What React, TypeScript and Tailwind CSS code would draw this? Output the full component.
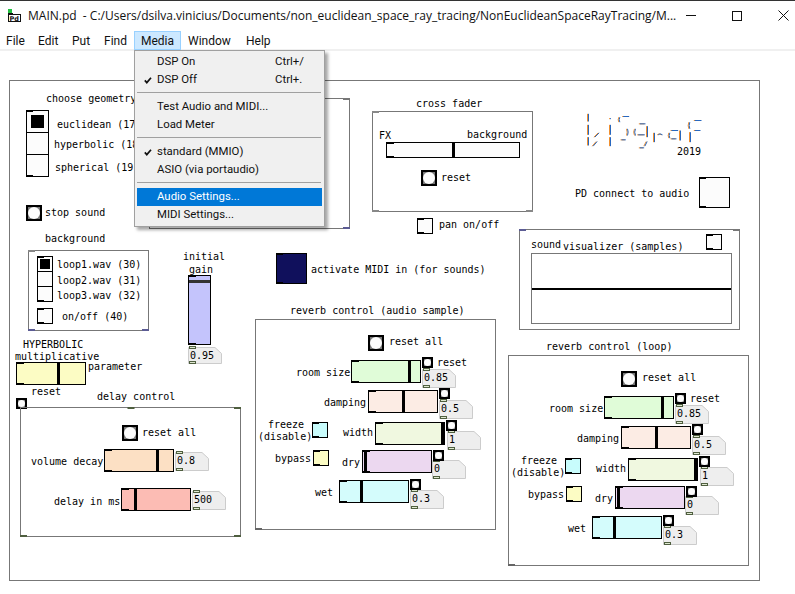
import React from "react";

const TOP = 51;
const ui = "font-['Open_Sans','Noto_Sans',sans-serif]";

type P = { x: number; y: number };
const at = (x: number, y: number, w?: number, h?: number): React.CSSProperties => ({ left: x, top: y - TOP, width: w, height: h });

function T({ x, y, children }: P & { children: React.ReactNode }) {
  return (
    <span className="absolute whitespace-pre text-[10px] leading-[12px] text-black font-['DejaVu_Sans_Mono',monospace]" style={at(x, y - 5)}>
      {children}
    </span>
  );
}

function Tick({ l, r, c, b, color = "bg-[#666]" }: { l?: boolean; r?: boolean; c?: boolean; b?: boolean; color?: string }) {
  return (
    <span
      className={`absolute h-[2px] w-[7px] ${color} ${b ? "bottom-[-1px]" : "top-[-1px]"} ${l ? "left-[-1px]" : ""} ${r ? "right-[-1px]" : ""} ${c ? "left-1/2 -translate-x-1/2" : ""}`}
    />
  );
}

function Box({ x, y, w, h, children }: P & { w: number; h: number; children?: React.ReactNode }) {
  return (
    <div className="absolute border border-[#777] box-border" style={at(x, y, w, h)}>
      {children}
    </div>
  );
}

function Bang({ x, y, s }: P & { s: number }) {
  return (
    <div className="absolute border-2 border-black bg-[#777] box-border" style={at(x, y, s, s)}>
      <div className="h-full w-full rounded-full bg-[#fcfcfc]" />
    </div>
  );
}

function Toggle({ x, y, s, s2, fill = "bg-[#fcfcfc]" }: P & { s: number; s2?: number; fill?: string }) {
  return (
    <div className={`absolute border border-black box-border ${fill}`} style={at(x, y, s, s2 ?? s)}>
      <span className="absolute left-[-1px] top-[-1px] h-[2px] w-[7px] bg-black" />
      <span className="absolute left-[-1px] bottom-[-1px] h-[2px] w-[7px] bg-black" />
    </div>
  );
}

function Radio({ x, y, s, n, sel, inset }: P & { s: number; n: number; sel: number; inset: number }) {
  return (
    <div className="absolute border border-black bg-[#fcfcfc] box-border flex flex-col" style={at(x, y, s + 1, s * n + 1)}>
      <span className="absolute left-[-1px] top-[-1px] h-[2px] w-[7px] bg-black" />
      <span className="absolute left-[-1px] bottom-[-1px] h-[2px] w-[7px] bg-black" />
      {Array.from({ length: n }).map((_, i) => (
        <div key={i} className={`flex-1 relative ${i ? "border-t border-black" : ""}`}>
          {i === sel && <span className="absolute bg-black" style={{ left: inset, right: inset, top: inset, bottom: inset }} />}
        </div>
      ))}
    </div>
  );
}

function HSlider({ x, y, w = 70, h = 23, fill, knob }: P & { w?: number; h?: number; fill: string; knob: number }) {
  return (
    <div className={`absolute border border-black box-border ${fill}`} style={at(x, y, w, h)}>
      <span className="absolute left-[-1px] top-[-1px] h-[2px] w-[8px] bg-black" />
      <span className="absolute left-[-1px] bottom-[-1px] h-[2px] w-[8px] bg-black" />
      <span className="absolute top-0 bottom-0 w-[3px] bg-black" style={{ left: knob - x - 1 }} />
    </div>
  );
}

function Num({ x, y, w = 33, h = 18, v }: P & { w?: number; h?: number; v: string }) {
  return (
    <>
      <svg className="absolute" style={at(x, y, w + 1, h + 1)}>
        <polygon
          points={`0.5,0.5 ${w - 6},0.5 ${w + 0.5},6.5 ${w + 0.5},${h + 0.5} 0.5,${h + 0.5}`}
          fill="#eeeeee"
          stroke="#cccccc"
        />
      </svg>
      <span className="absolute h-[3px] w-[7px] border border-[#4f5f3f] bg-[#dfe8d0] box-border" style={at(x + 1, y - 1)} />
      <span className="absolute h-[3px] w-[7px] border border-[#4f5f3f] bg-[#dfe8d0] box-border" style={at(x + 1, y + h - 2)} />
      <T x={x + 2} y={y + 8}>{v}</T>
    </>
  );
}

function Reverb({ dx, dy, title, tx }: { dx: number; dy: number; title: string; tx: number }) {
  const a = (x: number) => x + dx;
  const b = (y: number) => y + dy;
  const rows = [
    { lx: 296, ly: 372, t: "room size", sx: 351, sy: 360, f: "bg-[#e0fcd8]", k: 408, bx: 422, by: 357, nx: 422, ny: 369, v: "0.85" },
    { lx: 324, ly: 402, t: "damping", sx: 368, sy: 390, f: "bg-[#fcece4]", k: 402, bx: 439, by: 388, nx: 439, ny: 400, v: "0.5" },
    { lx: 343, ly: 432, t: "width", sx: 375, sy: 422, f: "bg-[#f0f8e0]", k: 441, bx: 446, by: 420, nx: 447, ny: 431, v: "1" },
    { lx: 342, ly: 462, t: "dry", sx: 362, sy: 450, f: "bg-[#ecd8f0]", k: 364, bx: 433, by: 450, nx: 432, ny: 460, v: "0" },
    { lx: 315, ly: 492, t: "wet", sx: 339, sy: 480, f: "bg-[#d4fcfc]", k: 360, bx: 410, by: 479, nx: 410, ny: 490, v: "0.3" },
  ];
  return (
    <>
      <T x={tx} y={b(310)}>{title}</T>
      <Box x={a(255)} y={b(319)} w={241} h={211}>
        <Tick l b />
      </Box>
      <Bang x={a(368)} y={b(335)} s={16} />
      <T x={a(389)} y={b(341)}>reset all</T>
      <T x={a(437)} y={b(362)}>reset</T>
      {rows.map((r) => (
        <React.Fragment key={r.t}>
          <T x={a(r.lx)} y={b(r.ly)}>{r.t}</T>
          <Num x={a(r.nx)} y={b(r.ny)} v={r.v} />
          <HSlider x={a(r.sx)} y={b(r.sy)} fill={r.f} knob={a(r.k)} />
          <Bang x={a(r.bx)} y={b(r.by)} s={11} />
        </React.Fragment>
      ))}
      <T x={a(268)} y={b(424)}>freeze</T>
      <T x={a(258)} y={b(436)}>(disable)</T>
      <Toggle x={a(312)} y={b(422)} s={16} fill="bg-[#c8fcfc]" />
      <T x={a(275)} y={b(458)}>bypass</T>
      <Toggle x={a(313)} y={b(450)} s={16} fill="bg-[#fcfcc4]" />
    </>
  );
}

const logoSegs = [
  "M36 25V48M36 58V88M36 95V120",
  "M68 82L55 95M62 108L50 122",
  "M102 38V41M102 58V88M102 95V122",
  "M130 35Q126 43 130 50M140 33H158M153 70Q157 80 153 90M135 103H148",
  "M177 70Q172 80 177 90M190 55H207M185 88H205M213 62V95M212 108L205 122M190 127H203",
  "M234 82V110M245 88Q250 82 258 88",
  "M280 82Q276 90 280 98M285 75H305M285 100H300M312 75V105",
  "M340 50Q336 60 340 70M355 45H375M355 75H372M342 80V110",
];

function Logo() {
  return (
    <svg className="absolute" style={at(575, 105, 135, 55)} viewBox="0 0 405 165" fill="none" strokeWidth="3">
      <g stroke="#f09030" transform="translate(1.5 1.5)">{logoSegs.map((d) => <path key={d} d={d} />)}</g>
      <g stroke="#2868c0" transform="translate(4.5 1.5)">{logoSegs.map((d) => <path key={d} d={d} />)}</g>
    </svg>
  );
}

function Canvas() {
  return (
    <div className="relative flex-1 bg-white overflow-hidden">
      <Box x={9} y={80} w={751} h={501} />

      {/* geometry */}
      <T x={46} y={98}>choose geometry</T>
      <Box x={149} y={98} w={201} h={131}>
        <Tick r color="bg-[#777]" />
        <Tick r b color="bg-[#5c5c94]" />
      </Box>
      <Radio x={26} y={110} s={22} n={3} sel={0} inset={4} />
      <T x={57} y={124}>euclidean (17)</T>
      <T x={54} y={144}>hyperbolic (18)</T>
      <T x={55} y={167}>spherical (19)</T>
      <Bang x={26} y={205} s={16} />
      <T x={45} y={212}>stop sound</T>

      {/* background */}
      <T x={45} y={238}>background</T>
      <Box x={28} y={250} w={121} h={81}>
        <Tick l color="bg-[#888]" />
        <Tick l b color="bg-[#5c5c94]" />
        <Tick r b color="bg-[#5c5c94]" />
      </Box>
      <Radio x={37} y={256} s={15} n={3} sel={0} inset={2} />
      <T x={57} y={264}>loop1.wav (30)</T>
      <T x={57} y={280}>loop2.wav (31)</T>
      <T x={57} y={295}>loop3.wav (32)</T>
      <Toggle x={37} y={308} s={16} />
      <T x={62} y={316}>on/off (40)</T>

      {/* gain */}
      <T x={183} y={256}>initial</T>
      <T x={189} y={269}>gain</T>
      <div className="absolute border border-black bg-[#c4c4fc] box-border" style={at(188, 275, 23, 70)}>
        <span className="absolute left-[-1px] top-[-1px] h-[2px] w-[8px] bg-black" />
        <span className="absolute left-[-1px] bottom-[-1px] h-[2px] w-[8px] bg-black" />
        <span className="absolute left-0 right-0 top-[4px] h-[3px] bg-[#333]" />
      </div>
      <Num x={188} y={347} w={33} h={16} v="0.95" />

      {/* hyperbolic */}
      <T x={23} y={344}>HYPERBOLIC</T>
      <T x={15} y={356}>multiplicative</T>
      <HSlider x={16} y={362} fill="bg-[#fcfcc4]" knob={57} />
      <T x={88} y={366}>parameter</T>
      <T x={31} y={391}>reset</T>
      <Bang x={16} y={398} s={11} />

      {/* delay */}
      <T x={97} y={396}>delay control</T>
      <Box x={20} y={407} w={221} h={130}>
        <Tick c color="bg-[#4f5f3f]" />
        <Tick r color="bg-[#4f5f3f]" />
        <Tick l b color="bg-[#4f5f3f]" />
        <Tick r b color="bg-[#4f5f3f]" />
      </Box>
      <Bang x={122} y={425} s={16} />
      <T x={142} y={432}>reset all</T>
      <T x={31} y={461}>volume decay</T>
      <Num x={175} y={452} v="0.8" />
      <HSlider x={104} y={449} fill="bg-[#fce0c4]" knob={156} />
      <T x={54} y={501}>delay in ms</T>
      <Num x={192} y={491} v="500" />
      <HSlider x={121} y={488} fill="bg-[#fcbcb4]" knob={134} />

      {/* midi */}
      <Toggle x={276} y={253} s={31} fill="bg-[#10105c]" />
      <T x={311} y={269}>activate MIDI in (for sounds)</T>

      {/* cross fader */}
      <T x={416} y={103}>cross fader</T>
      <Box x={372} y={111} w={161} h={101}>
        <Tick l color="bg-[#888]" />
        <Tick l b color="bg-[#888]" />
        <Tick r b color="bg-[#888]" />
      </Box>
      <T x={379} y={135}>FX</T>
      <T x={467} y={134}>background</T>
      <HSlider x={386} y={142} w={134} h={16} fill="bg-[#fcfcfc]" knob={452} />
      <Bang x={421} y={170} s={16} />
      <T x={441} y={177}>reset</T>
      <Toggle x={417} y={218} s={16} />
      <T x={439} y={224}>pan on/off</T>

      {/* logo */}
      <Logo />
      <T x={677} y={151}>2019</T>
      <T x={575} y={193}>PD connect to audio</T>
      <Toggle x={699} y={177} s={31} />

      {/* visualizer */}
      <Box x={519} y={229} w={221} h={101}>
        <Tick l color="bg-[#5c5c94]" />
        <Tick r color="bg-[#777]" />
      </Box>
      <T x={531} y={244}>sound</T>
      <T x={563} y={246}>visualizer (samples)</T>
      <Toggle x={706} y={234} s={16} />
      <div className="absolute border border-[#777] box-border flex items-center" style={at(531, 253, 201, 71)}>
        <div className="h-[2px] w-full bg-black" />
      </div>

      <Reverb dx={0} dy={0} title="reverb control (audio sample)" tx={290} />
      <Reverb dx={253} dy={36} title="reverb control (loop)" tx={546} />
    </div>
  );
}

function Check() {
  return (
    <svg className="absolute left-[7px] top-[6px]" width="8" height="7" viewBox="0 0 8 7" fill="none" stroke="#111" strokeWidth="1.7">
      <path d="M0.8 3.4L2.8 5.6L7 0.8" />
    </svg>
  );
}

function Item({ label, hint, checked, active }: { label: string; hint?: string; checked?: boolean; active?: boolean }) {
  return (
    <div className={`relative flex h-[18px] items-center pl-[20px] ${active ? "bg-[#0078d7] text-white" : "text-[#111]"}`}>
      {checked && <Check />}
      <span className="w-[118px] whitespace-pre">{label}</span>
      {hint && <span>{hint}</span>}
    </div>
  );
}

const Sep = () => (
  <div className="h-[9px] pt-[3px] pr-[1px]">
    <div className="h-px bg-[#a0a0a0]" />
  </div>
);

function MediaMenu() {
  return (
    <div className="absolute left-[134px] top-[20px] z-10 w-[191px] border border-[#a0a0a0] bg-[#f0f0f0] p-[2px] font-['Roboto',sans-serif] text-[11.4px] leading-none shadow-[3px_3px_3px_rgba(0,0,0,0.35)]">
      <Item label="DSP On" hint="Ctrl+/" />
      <Item label="DSP Off" hint="Ctrl+." checked />
      <Sep />
      <Item label="Test Audio and MIDI..." />
      <Item label="Load Meter" />
      <Sep />
      <Item label="standard (MMIO)" checked />
      <Item label="ASIO (via portaudio)" />
      <Sep />
      <Item label="Audio Settings..." active />
      <Item label="MIDI Settings..." />
    </div>
  );
}

function PdIcon() {
  return (
    <svg width="16" height="16" viewBox="0 0 16 16" className="ml-[7px] shrink-0">
      <rect x="1" y="1" width="4" height="4" fill="#22c040" />
      <rect x="1.5" y="6.5" width="12" height="7" fill="#fff" stroke="#111" />
      <rect x="1" y="5" width="5" height="2" fill="#111" />
      <text x="2.5" y="12.5" fontSize="6.5" fontWeight="700" fontFamily="DejaVu Sans" fill="#111">Pd</text>
    </svg>
  );
}

const menus = [
  { t: "File", c: "w-[32px] pl-[6px]" },
  { t: "Edit", c: "w-[34px] pl-[6px]" },
  { t: "Put", c: "w-[32px] pl-[6px]" },
  { t: "Find", c: "w-[36px] pl-[6px]" },
  { t: "Media", c: "w-[47px] pl-[6px] border border-[#99d1ff] bg-[#cce8ff]" },
  { t: "Window", c: "w-[59px] pl-[7px]" },
  { t: "Help", c: "w-[40px] pl-[6px]" },
];

export default function App() {
  return (
    <div className={`flex h-[594px] w-[795px] flex-col overflow-hidden bg-white ${ui}`}>
      <div className="flex h-[30px] shrink-0 items-center border-t border-[#333] bg-white">
        <PdIcon />
        <span className="ml-[5px] w-[640px] whitespace-pre text-[12px] text-[#111]">
          MAIN.pd  - C:/Users/dsilva.vinicius/Documents/non_euclidean_space_ray_tracing/NonEuclideanSpaceRayTracing/M...
        </span>
        <div className="ml-auto mr-[11px] flex h-full items-center text-[#111]">
          <div className="flex w-[46px] justify-center"><div className="h-px w-[10px] bg-[#111]" /></div>
          <div className="flex w-[46px] justify-center"><div className="h-[10px] w-[10px] border border-[#111]" /></div>
          <div className="flex w-[46px] justify-center">
            <svg width="11" height="11" viewBox="0 0 11 11" stroke="#111"><path d="M0.5 0.5L10.5 10.5M10.5 0.5L0.5 10.5" /></svg>
          </div>
        </div>
      </div>
      <div className="relative flex h-[21px] shrink-0 items-start border-b-2 border-[#f0f0f0] font-['Roboto',sans-serif] text-[12px] text-[#111]">
        <div className="mt-[1px] flex h-[19px]">
          {menus.map((m) => (
            <div key={m.t} className={`flex items-center box-border ${m.c}`}>
              {m.t}
            </div>
          ))}
        </div>
        <MediaMenu />
      </div>
      <Canvas />
    </div>
  );
}
